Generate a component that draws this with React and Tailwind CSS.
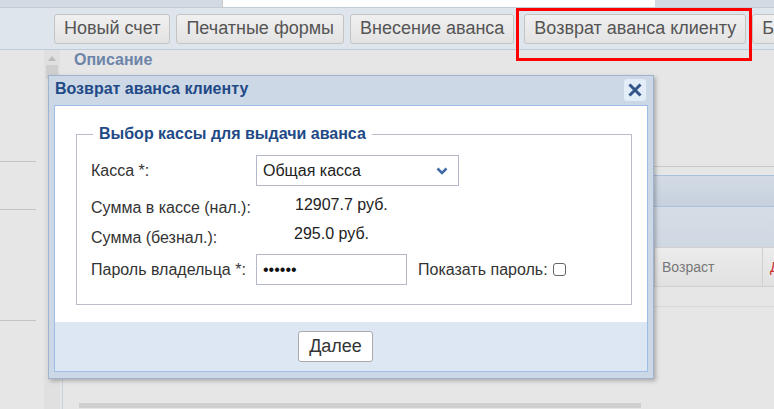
import React from 'react';

const font = { fontFamily: '"Liberation Sans", Arial, sans-serif' };

const ToolbarButton = ({ children, className = '' }) => (
    <button className={`shrink-0 h-[30px] px-[9px] rounded-[3px] border border-[#c4c4c4] bg-gradient-to-b from-[#f0f0f0] to-[#e3e3e3] text-[18px] text-[#555] whitespace-nowrap ${className}`}>
        {children}
    </button>
);

const Row = ({ label, children, className = '' }) => (
    <div className={`flex items-center ${className}`}>
        <div className="w-[165px] shrink-0 text-[16px] text-[#333]">{label}</div>
        {children}
    </div>
);

const App = () => {
    return (
        <div className="relative w-[774px] h-[409px] overflow-hidden bg-[#e6e6e6] flex flex-col" style={font}>
            {/* top strip */}
            <div className="h-[8px] shrink-0 flex bg-[#d3dae3] border-b border-[#c3ccd6]">
                <div className="w-[222px]" />
                <div className="w-[433px] bg-white border-l border-[#c8c8c8]" />
            </div>

            {/* toolbar */}
            <div className="h-[42px] shrink-0 bg-[#dfe5ec] border-b border-[#bccbdd] flex items-center gap-[6px] pl-[54px] overflow-hidden">
                <ToolbarButton>Новый счет</ToolbarButton>
                <ToolbarButton>Печатные формы</ToolbarButton>
                <ToolbarButton>Внесение аванса</ToolbarButton>
                <ToolbarButton className="ml-[4px]">Возврат аванса клиенту</ToolbarButton>
                <ToolbarButton>Бланки</ToolbarButton>
            </div>

            {/* main area */}
            <div className="flex-1 flex min-h-0">
                <div className="w-[44px] shrink-0 flex flex-col">
                    <div className="h-[112px] border-b border-[#c4c4c4] mr-[8px]" />
                    <div className="h-[48px] border-b border-[#c4c4c4] mr-[8px]" />
                    <div className="h-[111px] border-b border-[#c4c4c4] mr-[8px]" />
                </div>
                <div className="w-[16px] shrink-0 flex flex-col items-center bg-[#e0e0e0]">
                    <div className="mt-[6px] w-0 h-0 border-l-[4px] border-r-[4px] border-b-[5px] border-l-transparent border-r-transparent border-b-[#bbb]" />
                    <div className="mt-[4px] w-[12px] h-[14px] bg-[#cfcfcf]" />
                </div>
                <div className="flex-1 min-w-0 flex flex-col overflow-hidden">
                    <div className="h-[20px] pl-[14px] text-[16px] font-bold text-[#6c84a8] leading-[20px]">Описание</div>
                    <div className="h-[97px] border-b border-[#c9c9c9]" />
                    <div className="h-[8px]" />
                    <div className="h-[31px] border-t border-[#a9c0de] bg-gradient-to-b from-[#d3dbe5] to-[#c6d1de]" />
                    <div className="h-[41px] border-t border-[#a9c0de] bg-gradient-to-b from-[#d6dde6] to-[#cfd7e2]" />
                    <div className="h-[40px] shrink-0 border-t border-[#b8c8dc] flex bg-gradient-to-b from-[#ececec] to-[#e1e1e1] border-b border-[#d0d0d0]">
                        <div className="w-[595px] shrink-0 border-r border-[#d0d0d0]" />
                        <div className="w-[108px] shrink-0 pl-[7px] flex items-center text-[14px] text-[#777] border-r border-[#d0d0d0]">Возраст</div>
                        <div className="pl-[7px] flex items-center text-[14px] text-[#c33]">Д</div>
                    </div>
                    <div className="h-[20px] border-b border-[#d9d9d9]" />
                    <div className="flex-1 flex flex-col justify-end ml-[2px] border-l border-[#c8d3e0]">
                        <div className="ml-[16px] w-[562px] h-[5px] bg-[#cfcfcf] mb-[1px]" />
                    </div>
                </div>
            </div>

            {/* highlight */}
            <div className="absolute left-[516px] top-[8px] w-[236px] h-[53px] border-[3px] border-[#ff0000]" />

            {/* dialog */}
            <div className="absolute left-[48px] top-[75px] w-[606px] h-[304px] bg-[#cdd8e6] border border-[#9fb3cc] shadow-[2px_2px_4px_rgba(0,0,0,0.25)] flex flex-col px-[5px] pb-[6px]">
                <div className="h-[29px] flex items-center justify-between pl-[1px] pb-[3px]">
                    <span className="text-[16px] font-bold text-[#1f4a86]">Возврат аванса клиенту</span>
                    <button className="w-[22px] h-[22px] rounded-[3px] bg-[#e3edf8] flex items-center justify-center mr-[2px] mt-[1px]">
                        <svg width="14" height="14" viewBox="0 0 14 14">
                            <path d="M2.5 2.5 L11.5 11.5 M11.5 2.5 L2.5 11.5" stroke="#34558a" strokeWidth="3" strokeLinecap="square" />
                        </svg>
                    </button>
                </div>
                <div className="flex-1 border border-[#9dbde6] flex flex-col">
                    <div className="h-[216px] bg-white pt-[16px] pl-[21px] pr-[15px]">
                        <fieldset className="h-[183px] border border-[#b8bccb] pl-[14px] pr-[10px] pt-[9px]">
                            <legend className="ml-[2px] px-[6px] text-[16px] font-bold text-[#1f4a86]">Выбор кассы для выдачи аванса</legend>
                            <Row label="Касса *:" className="h-[31px]">
                                <div className="w-[203px] h-[31px] border border-[#b4b8c8] flex items-center justify-between pl-[6px] pr-[10px] text-[16px] text-[#222]">
                                    <span>Общая касса</span>
                                    <svg width="12" height="8" viewBox="0 0 12 8">
                                        <path d="M1.5 1.5 L6 6 L10.5 1.5" stroke="#3f6aa5" strokeWidth="2.5" fill="none" />
                                    </svg>
                                </div>
                            </Row>
                            <Row label="Сумма в кассе (нал.):" className="h-[30px] mt-[7px]">
                                <span className="ml-[39px] -mt-[6px] text-[16px] text-[#222]">12907.7 руб.</span>
                            </Row>
                            <Row label="Сумма (безнал.):" className="h-[30px]">
                                <span className="ml-[38px] -mt-[8px] text-[16px] text-[#222]">295.0 руб.</span>
                            </Row>
                            <Row label="Пароль владельца *:" className="h-[31px] mt-[1px]">
                                <div className="w-[151px] h-[31px] border border-[#b4b8c8] flex items-center pl-[6px] text-[16px] text-[#111]">••••••</div>
                                <span className="ml-[11px] text-[16px] text-[#333]">Показать пароль:</span>
                                <span className="ml-[5px] w-[13px] h-[13px] rounded-[3px] border border-[#666] bg-white" />
                            </Row>
                        </fieldset>
                    </div>
                    <div className="flex-1 bg-[#dde7f4] flex items-start pt-[9px] pl-[243px]">
                        <button className="w-[75px] h-[31px] rounded-[3px] border border-[#aaa] bg-white text-[18px] text-[#333]">Далее</button>
                    </div>
                </div>
            </div>
        </div>
    );
};

export default App;
